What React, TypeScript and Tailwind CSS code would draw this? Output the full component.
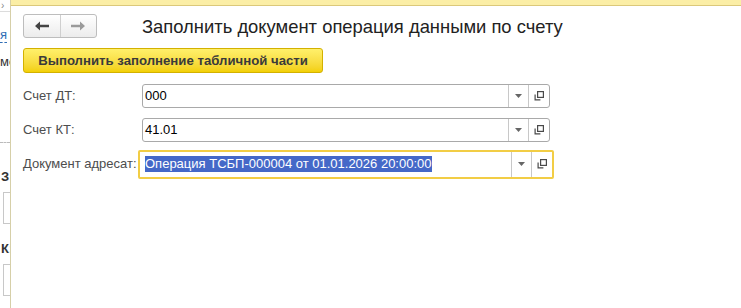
import React from "react";

const font = { fontFamily: '"Liberation Sans", Arial, sans-serif' };

function OpenIcon() {
  return (
    <svg width="12" height="12" viewBox="0 0 12 12" fill="none" stroke="#4a4a4a" strokeWidth="1.2">
      <rect x="4.6" y="1.6" width="5.8" height="5.8" />
      <path d="M2.1 4.6V9.9H7.4" />
    </svg>
  );
}

function FieldButtons() {
  return (
    <>
      <div className="w-[20px] h-full border-l border-[#c8c8c8] flex items-center justify-center">
        <svg width="7" height="4" viewBox="0 0 7 4">
          <path d="M0 0h7L3.5 4z" fill="#666" />
        </svg>
      </div>
      <div className="w-[21px] h-full border-l border-[#c8c8c8] flex items-center justify-center">
        <OpenIcon />
      </div>
    </>
  );
}

function Field({ label, value }: { label: string; value: string }) {
  return (
    <div className="h-[34px] flex items-center">
      <div className="w-[115px] text-[13px] text-[#4d4d4d]">{label}</div>
      <div className="ml-[4px] w-[408px] h-[24px] flex items-center border border-[#a9a9a9] rounded-[3px] bg-white">
        <div className="flex-1 pl-[2px] text-[13px] text-black">{value}</div>
        <FieldButtons />
      </div>
    </div>
  );
}

function BackgroundStrip() {
  return (
    <div className="w-[10px] shrink-0 overflow-hidden flex flex-col text-[13px] bg-white">
      <div className="h-[12px] border-b border-[#dcdcdc] flex items-center pl-[1px] text-[10px] text-[#888] leading-none">
        ›
      </div>
      <div className="mt-[15px] h-[16px] leading-[16px] text-[#2f6eb5] border-b border-dashed border-[#2f6eb5] w-[7px]">
        я
      </div>
      <div className="mt-[11px] h-[16px] leading-[16px] text-[#333] whitespace-nowrap">ме</div>
      <div className="mt-[72px] border-t border-dashed border-[#bbb]" />
      <div className="mt-[26px] h-[16px] leading-[16px] font-bold text-[#333] whitespace-nowrap pl-[1px]">З:</div>
      <div className="mt-[7px] ml-[3px] h-[32px] w-[20px] border border-[#c8c8c8] bg-white" />
      <div className="mt-[17px] h-[16px] leading-[16px] font-bold text-[#333] whitespace-nowrap pl-[1px]">К:</div>
      <div className="mt-[7px] ml-[3px] h-[32px] w-[20px] border border-[#c8c8c8] bg-white" />
    </div>
  );
}

export default function App() {
  return (
    <div className="w-[741px] h-[308px] flex bg-white overflow-hidden" style={font}>
      <BackgroundStrip />
      <div className="flex-1 flex flex-col border-l border-[#d6cfa8] bg-white">
        <div className="h-[6px] bg-[#fbeea6] border-b border-[#dbc87a]" />
        <div className="pl-[12px] flex flex-col">
          {/* header */}
          <div className="mt-[8px] flex items-center">
            <div className="w-[74px] h-[24px] flex border border-[#bdbdbd] rounded-[3px] bg-gradient-to-b from-white to-[#ececec]">
              <div className="flex-1 flex items-center justify-center border-r border-[#cfcfcf]">
                <svg width="14" height="10" viewBox="0 0 14 10">
                  <path d="M0 5L5 0.5V3.8H14V6.2H5V9.5z" fill="#444" />
                </svg>
              </div>
              <div className="flex-1 flex items-center justify-center">
                <svg width="14" height="10" viewBox="0 0 14 10">
                  <path d="M14 5L9 0.5V3.8H0V6.2H9V9.5z" fill="#9a9a9a" />
                </svg>
              </div>
            </div>
            <div className="ml-[45px] mt-[2px] text-[18.4px] text-[#222] leading-none">
              Заполнить документ операция данными по счету
            </div>
          </div>

          <div className="mt-[10px] w-[300px] h-[25px] flex items-center justify-center rounded-[3px] border border-[#d3b100] bg-gradient-to-b from-[#fff06a] to-[#f3d000] text-[13.2px] font-bold text-[#3a3a3a]">
            Выполнить заполнение табличной части
          </div>

          <div className="mt-[6px] flex flex-col">
            <Field label="Счет ДТ:" value="000" />
            <Field label="Счет КТ:" value="41.01" />
            <div className="h-[34px] flex items-center">
              <div className="w-[115px] text-[13px] text-[#4d4d4d]">Документ адресат:</div>
              <div className="w-[416px] h-[29px] flex items-center border-2 border-[#f2cd45] rounded-[2px] bg-white">
                <div className="flex-1 pl-[5px] flex items-center">
                  <span className="bg-[#4468c8] text-white text-[13px] leading-[16px] whitespace-nowrap">
                    Операция ТСБП-000004 от 01.01.2026 20:00:00
                  </span>
                </div>
                <FieldButtons />
              </div>
            </div>
          </div>
        </div>
      </div>
    </div>
  );
}
